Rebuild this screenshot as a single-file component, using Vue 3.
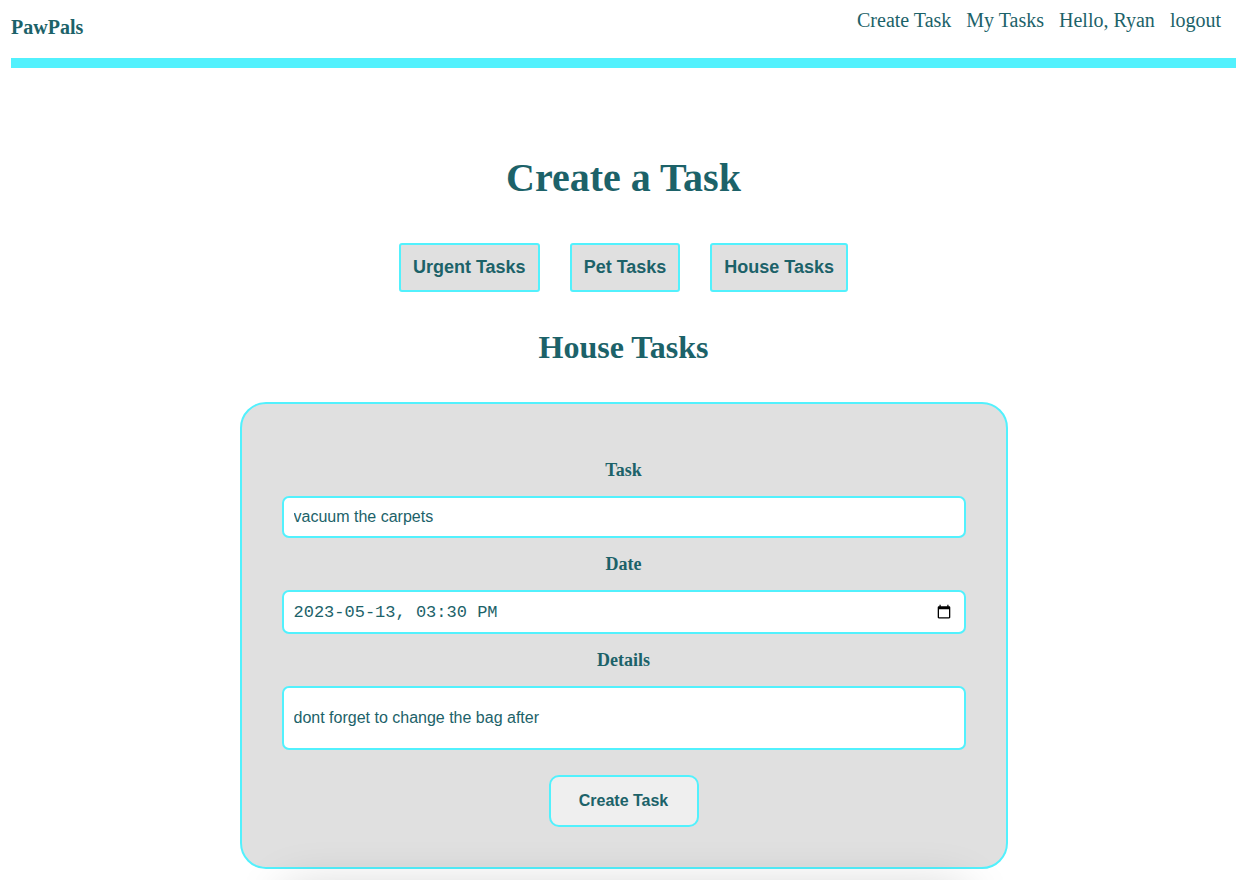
<script setup>
import { ref } from 'vue'

const categories = ['Urgent Tasks', 'Pet Tasks', 'House Tasks']
const selected = ref('House Tasks')
const task = ref('vacuum the carpets')
const date = ref('2023-05-13, 03:30 PM')
const details = ref('dont forget to change the bag after')
</script>

<template>
  <div class="page">
    <header class="header">
      <a class="brand" href="#">PawPals</a>
      <nav class="nav">
        <a href="#create">Create Task</a>
        <a href="#tasks">My Tasks</a>
        <a href="#profile">Hello, Ryan</a>
        <a href="#logout">logout</a>
      </nav>
    </header>

    <main class="main">
      <h1>Create a Task</h1>
      <div class="tabs">
        <button v-for="c in categories" :key="c" type="button" class="tab" @click="selected = c">{{ c }}</button>
      </div>
      <h2>{{ selected }}</h2>

      <form class="card" @submit.prevent>
        <label for="task">Task</label>
        <input id="task" v-model="task" class="field" type="text" />

        <label for="date">Date</label>
        <div class="field date-field">
          <input id="date" v-model="date" type="text" />
          <button type="button" class="picker" aria-label="Open date picker">
            <svg viewBox="0 0 16 16" width="16" height="16" aria-hidden="true">
              <path fill="#000" fill-rule="evenodd" d="M3.500 .8h1.200v1.400h6.600V.8h1.200v1.400h.6c.7 0 1.200.5 1.200 1.200v9.800c0 .7-.5 1.200-1.200 1.200H2.900c-.7 0-1.200-.5-1.200-1.200V3.400c0-.7.5-1.200 1.200-1.200h.6zM3 5.200v8h10v-8z" />
            </svg>
          </button>
        </div>

        <label for="details">Details</label>
        <input id="details" v-model="details" class="field tall" type="text" />

        <button type="submit" class="submit">Create Task</button>
      </form>
    </main>
    <div class="bottom-shade"></div>
  </div>
</template>

<style>
body {
  background: #fff;
}
</style>

<style scoped>
.page {
  --ink: #1c6269;
  --cyan: #52f1fd;
  --grey: #e0e0e0;
  padding: 0 1px 8px 11px;
  color: var(--ink);
  font-family: "Liberation Serif", "Times New Roman", serif;
}
.page *,
.page {
  box-sizing: border-box;
}
.header {
  display: flex;
  justify-content: space-between;
  align-items: flex-start;
  height: 68px;
  padding: 8px 15px 0 0;
  border-bottom: 10px solid var(--cyan);
  font-size: 20px;
  line-height: 24px;
}
.header a {
  color: inherit;
  text-decoration: none;
}
.brand {
  margin-top: 7px;
  font-weight: bold;
}
.nav {
  display: flex;
  gap: 15px;
}
.main {
  display: flex;
  flex-direction: column;
  align-items: center;
  padding-top: 87px;
}
h1 {
  margin: 0 0 42px;
  font-size: 40px;
  line-height: 46px;
}
.tabs {
  display: flex;
  flex-wrap: wrap;
  justify-content: center;
  gap: 30px;
}
.tab {
  padding: 12px;
  border: 2px solid var(--cyan);
  border-radius: 3px;
  background: var(--grey);
  color: inherit;
  font: bold 18px/21px "Liberation Sans", Arial, sans-serif;
}
h2 {
  margin: 37px 0;
  font-size: 32px;
  line-height: 36px;
}
.card {
  display: flex;
  flex-direction: column;
  align-items: center;
  width: 100%;
  max-width: 768px;
  padding: 40px;
  border: 2px solid var(--cyan);
  border-radius: 26px;
  background: var(--grey);
}
label {
  margin: 16px 0;
  font-size: 18px;
  font-weight: bold;
  line-height: 20px;
}
.field {
  width: 100%;
  height: 42px;
  padding: 0 10px;
  border: 2px solid var(--cyan);
  border-radius: 7px;
  background: #fff;
  color: inherit;
  font: 16px "Liberation Sans", Arial, sans-serif;
}
.date-field {
  display: flex;
  align-items: center;
  height: 44px;
}
.date-field input {
  flex: 1;
  min-width: 0;
  padding: 0;
  border: 0;
  background: transparent;
  color: inherit;
  font: 17px "Liberation Mono", "Courier New", monospace;
}
.picker {
  display: flex;
  margin-right: 2px;
  padding: 0;
  border: 0;
  background: transparent;
}
.tall {
  height: 64px;
}
.submit {
  min-width: 150px;
  margin-top: 25px;
  padding: 15px 28px;
  border: 2px solid var(--cyan);
  border-radius: 10px;
  background: #efefef;
  color: inherit;
  font: bold 16px/18px "Liberation Sans", Arial, sans-serif;
}
.bottom-shade {
  position: fixed;
  top: 100%;
  left: 23%;
  right: 22%;
  height: 60px;
  box-shadow: 0 10px 50px rgba(0, 0, 0, 0.2);
  pointer-events: none;
}
</style>
